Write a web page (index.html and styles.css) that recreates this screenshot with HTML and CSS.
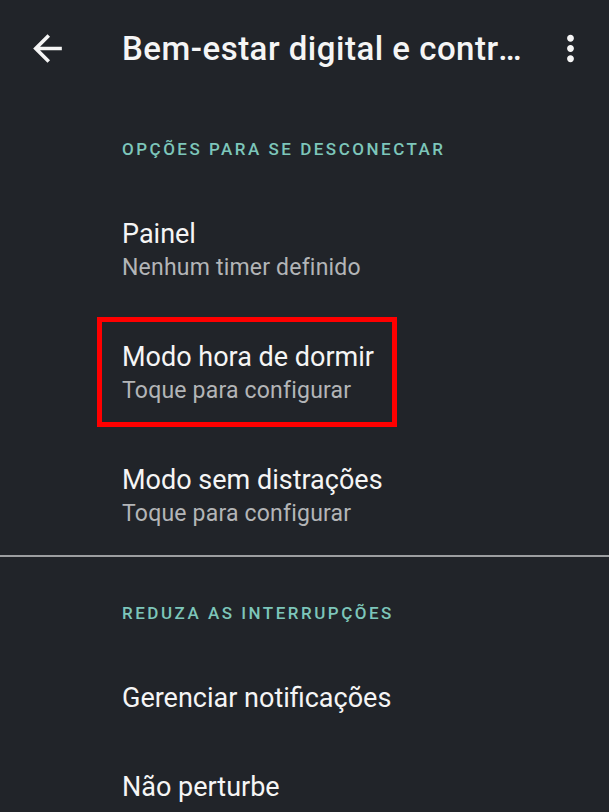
FILE: index.html
```html
<!DOCTYPE html>
<html lang="pt">
<head>
  <meta charset="UTF-8">
  <title>Bem-estar digital e controles parentais</title>
  <link rel="stylesheet" href="styles.css">
</head>
<body>
  <!-- TOOLBAR -->
  <header class="toolbar">
    <svg class="icon back" viewBox="0 0 24 24"><path d="M20 11H7.83l5.59-5.59L12 4l-8 8 8 8 1.41-1.41L7.83 13H20v-2z"/></svg>
    <h1 class="title">Bem-estar digital e controles parentais</h1>
    <svg class="icon more" viewBox="0 0 24 24"><path d="M12 8c1.1 0 2-.9 2-2s-.9-2-2-2-2 .9-2 2 .9 2 2 2zm0 2c-1.1 0-2 .9-2 2s.9 2 2 2 2-.9 2-2-.9-2-2-2zm0 6c-1.1 0-2 .9-2 2s.9 2 2 2 2-.9 2-2-.9-2-2-2z"/></svg>
  </header>

  <!-- DISCONNECT OPTIONS -->
  <section class="group">
    <h2 class="group-label">Opções para se desconectar</h2>
    <div class="item">
      <div class="item-title">Painel</div>
      <div class="item-sub">Nenhum timer definido</div>
    </div>
    <div class="item">
      <div class="highlight">
        <div class="item-title">Modo hora de dormir</div>
        <div class="item-sub">Toque para configurar</div>
      </div>
    </div>
    <div class="item">
      <div class="item-title">Modo sem distrações</div>
      <div class="item-sub">Toque para configurar</div>
    </div>
  </section>

  <hr class="divider">

  <!-- INTERRUPTIONS -->
  <section class="group">
    <h2 class="group-label">Reduza as interrupções</h2>
    <div class="item single">
      <div class="item-title">Gerenciar notificações</div>
    </div>
    <div class="item single">
      <div class="item-title">Não perturbe</div>
    </div>
  </section>
</body>
</html>
```

FILE: styles.css
```css
body {
  margin: 0;
  height: 812px;
  overflow: hidden;
  background-color: #212429;
  color: #f5f5f5;
  font-family: Roboto, "Noto Sans", Arial, sans-serif;
}

.toolbar {
  display: flex;
  align-items: center;
  height: 96px;
}

.icon {
  fill: #f5f5f5;
  flex: none;
}

.icon.back {
  width: 43px;
  height: 43px;
  margin-left: 26px;
}

.icon.more {
  width: 41px;
  height: 41px;
  margin-left: auto;
  margin-right: 18px;
}

.title {
  flex: none;
  width: 400px;
  margin: 0 0 0 53px;
  font-size: 33px;
  font-weight: 500;
  letter-spacing: 0.5px;
  white-space: nowrap;
  overflow: hidden;
  text-overflow: ellipsis;
}

.group-label {
  margin: 0;
  padding: 43px 0 32px 122px;
  font-size: 17px;
  line-height: 20px;
  font-weight: 500;
  letter-spacing: 2.5px;
  text-transform: uppercase;
  color: #7dc6ba;
}

.divider + .group .group-label {
  padding-top: 46px;
}

.item {
  padding: 26px 0 29px 122px;
}

.group .item:last-child {
  padding-bottom: 24px;
}

.item.single:last-child {
  padding-bottom: 29px;
}

.item-title {
  font-size: 27px;
  line-height: 34px;
}

.item-sub {
  font-size: 23px;
  line-height: 34px;
  letter-spacing: 0.2px;
  color: #b3b5b7;
}

.highlight {
  width: 300px;
  box-sizing: border-box;
  margin: -23px 0 -19px -25px;
  padding: 18px 0 14px 20px;
  border: 5px solid #ff0000;
}

.divider {
  margin: 0;
  height: 2px;
  border: none;
  background-color: #9c9ea0;
}
```
